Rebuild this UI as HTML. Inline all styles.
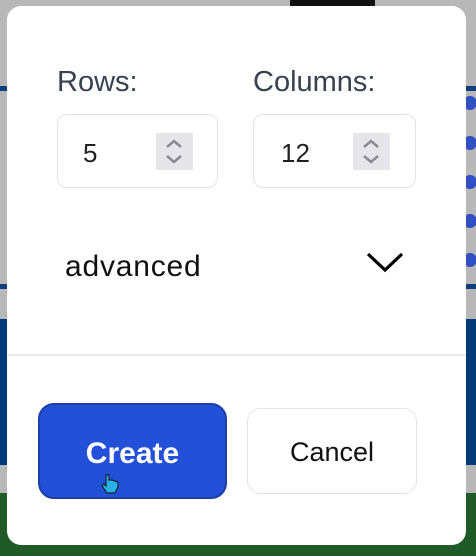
<!DOCTYPE html>
<html><head><style>
html,body{margin:0;padding:0;width:476px;height:556px;overflow:hidden;background:#b8b8b8;font-family:"Liberation Sans",sans-serif;position:relative}
.a{position:absolute}
</style></head><body>
<div class="a" style="left:290px;top:0;width:85px;height:8px;background:#111"></div>
<div class="a" style="left:0;top:86px;width:476px;height:5px;background:#0e3f7c"></div>
<div class="a" style="left:0;top:284px;width:476px;height:5px;background:#0e3f7c"></div>
<div class="a" style="left:0;top:319px;width:476px;height:146px;background:#053a78"></div>
<div class="a" style="left:0;top:493px;width:476px;height:63px;background:#1f5a28"></div>
<div class="a" style="left:463px;top:96px;width:14px;height:14px;border-radius:50%;background:#2f4fc2"></div>
<div class="a" style="left:463px;top:136px;width:14px;height:14px;border-radius:50%;background:#2f4fc2"></div>
<div class="a" style="left:463px;top:175px;width:14px;height:14px;border-radius:50%;background:#2f4fc2"></div>
<div class="a" style="left:463px;top:214px;width:14px;height:14px;border-radius:50%;background:#2f4fc2"></div>
<div class="a" style="left:463px;top:253px;width:14px;height:14px;border-radius:50%;background:#2f4fc2"></div>
<div class="a" style="left:7px;top:6px;width:459px;height:539px;background:#fff;border-radius:14px"></div>
<div class="a" style="left:57px;top:66px;font-size:29px;color:#374151">Rows:</div>
<div class="a" style="left:253px;top:66px;font-size:29px;color:#374151">Columns:</div>
<div class="a" style="left:57px;top:114px;width:161px;height:74px;border:1.5px solid #e2e4e8;border-radius:10px;box-sizing:border-box"></div>
<div class="a" style="left:253px;top:114px;width:163px;height:74px;border:1.5px solid #e2e4e8;border-radius:10px;box-sizing:border-box"></div>
<div class="a" style="left:83px;top:138px;font-size:26px;color:#222">5</div>
<div class="a" style="left:281px;top:138px;font-size:26px;color:#222">12</div>
<svg class="a" style="left:156px;top:133px" width="37" height="37"><rect width="37" height="37" fill="#e6e6ea"/><path d="M11 14l7-6 7 6M11 23l7 6 7-6" stroke="#8a8a96" stroke-width="2.5" fill="none"/></svg>
<svg class="a" style="left:353px;top:133px" width="37" height="37"><rect width="37" height="37" fill="#e6e6ea"/><path d="M11 14l7-6 7 6M11 23l7 6 7-6" stroke="#8a8a96" stroke-width="2.5" fill="none"/></svg>
<div class="a" style="left:65px;top:250px;font-size:30px;letter-spacing:0.8px;color:#111">advanced</div>
<svg class="a" style="left:365px;top:250px" width="40" height="24"><path d="M3 4l17 16 17-16" stroke="#000" stroke-width="3.2" fill="none"/></svg>
<div class="a" style="left:7px;top:354px;width:459px;height:2px;background:#e8e8ec"></div>
<div class="a" style="left:38px;top:403px;width:189px;height:96px;background:#2350d8;border:2px solid #1c3ea8;border-radius:16px;box-sizing:border-box;color:#fff;font-weight:bold;font-size:30px;text-align:center;line-height:98px">Create</div>
<div class="a" style="left:247px;top:408px;width:170px;height:86px;border:1.5px solid #e2e4e8;border-radius:14px;box-sizing:border-box;color:#111;font-size:27px;text-align:center;line-height:86px">Cancel</div>
<svg class="a" style="left:101px;top:473px" width="18" height="22"><path d="M5 2v11l-2-2-2 2 5 7h8l3-6v-5l-3-1-3-1-3 0V2z" fill="#2ab0e8" stroke="#123" stroke-width="1.2"/></svg>
</body></html>
